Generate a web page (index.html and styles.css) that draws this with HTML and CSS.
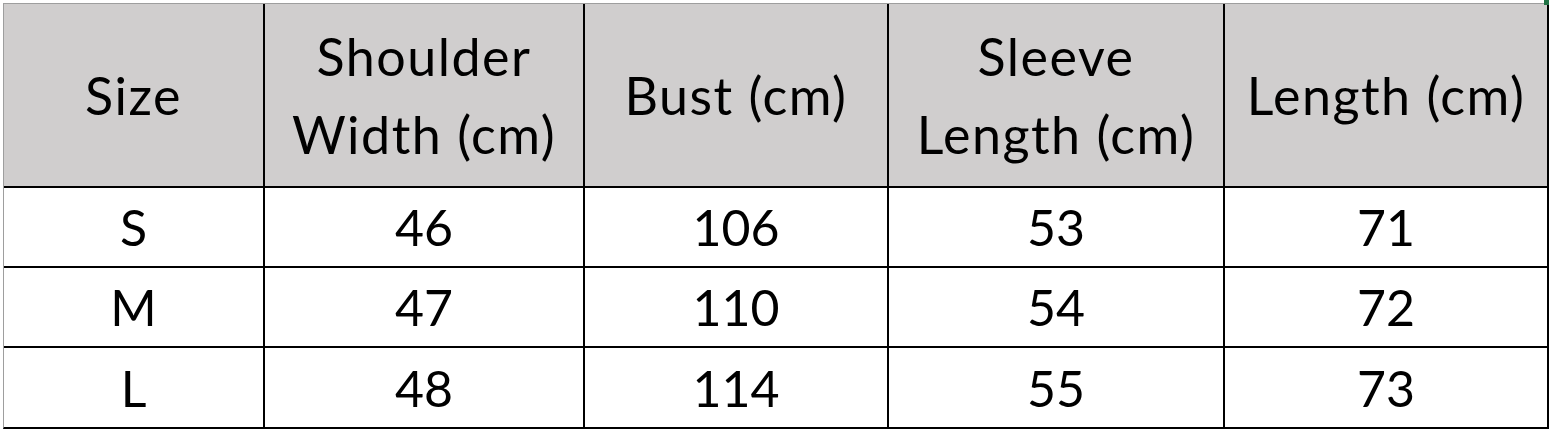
FILE: index.html
```html
<!DOCTYPE html>
<html>
<head>
<meta charset="utf-8">
<link rel="stylesheet" href="styles.css">
</head>
<body>
<div class="sheet">
  <div class="grid">
    <div class="cell head">Size</div>
    <div class="cell head">Shoulder<br>Width (cm)</div>
    <div class="cell head">Bust (cm)</div>
    <div class="cell head">Sleeve<br>Length (cm)</div>
    <div class="cell head">Length (cm)</div>

    <div class="cell">S</div>
    <div class="cell">46</div>
    <div class="cell">106</div>
    <div class="cell">53</div>
    <div class="cell">71</div>

    <div class="cell">M</div>
    <div class="cell">47</div>
    <div class="cell">110</div>
    <div class="cell">54</div>
    <div class="cell">72</div>

    <div class="cell">L</div>
    <div class="cell">48</div>
    <div class="cell">114</div>
    <div class="cell">55</div>
    <div class="cell">73</div>
  </div>
  <span class="handle"></span>
</div>
</body>
</html>
```

FILE: styles.css
```css
html, body {
  margin: 0;
  padding: 0;
  background: #ffffff;
}

body {
  width: 1551px;
  height: 431px;
  overflow: hidden;
  font-family: "Lato", "Open Sans", sans-serif;
  color: #000;
}

.sheet {
  position: relative;
  padding: 3px 0 0 3px;
}

.grid {
  display: grid;
  grid-template-columns: 259px 318px 302px 334px 322px;
  grid-template-rows: 182px 78px 78px 79px;
  gap: 2px;
  width: max-content;
  background: #000;
  border-left: 1px solid #9e9e9e;
  border-top: 1px solid #9e9e9e;
  border-right: 2px solid #000;
  border-bottom: 2px solid #000;
}

.cell {
  background: #ffffff;
  display: flex;
  align-items: center;
  justify-content: center;
  text-align: center;
  font-size: 50px;
  line-height: 78px;
}

.head {
  background: #d0cece;
  font-size: 52px;
  letter-spacing: 1.5px;
}

.handle {
  position: absolute;
  top: 0;
  right: 2px;
  width: 5px;
  height: 5px;
  background: #217346;
}
```
